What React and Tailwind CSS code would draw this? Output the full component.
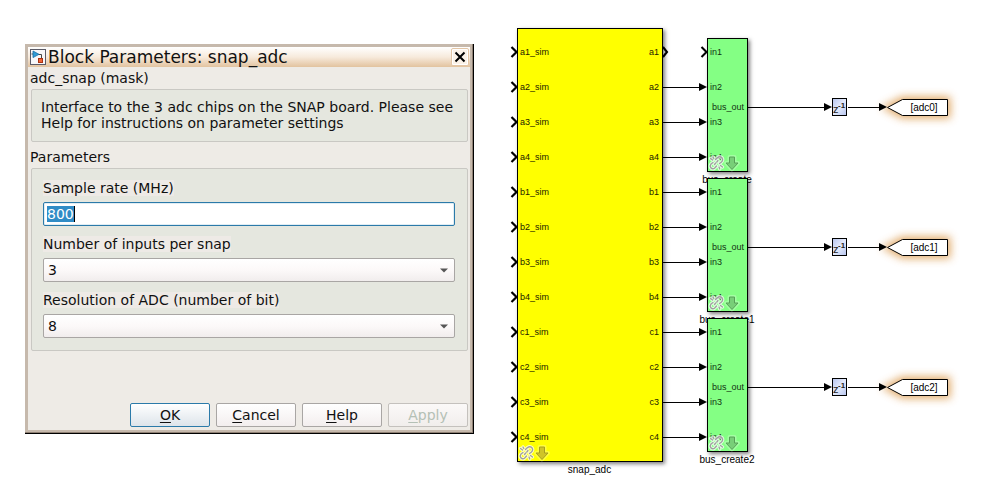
import React from "react";

const ROWS = ["a1", "a2", "a3", "a4", "b1", "b2", "b3", "b4", "c1", "c2", "c3", "c4"];
const GROUPS = [
  { name: "bus_create", tag: "[adc0]", z: "z-10" },
  { name: "bus_create1", tag: "[adc1]", z: "z-20" },
  { name: "bus_create2", tag: "[adc2]", z: "z-30" },
];

function BlockIcon() {
  return (
    <svg width="16" height="16" viewBox="0 0 16 16" className="shrink-0">
      <rect x="0.5" y="0.5" width="15" height="15" fill="#f6f6f8" stroke="#5a5a66" />
      <path d="M1.5 5H4M8 5.5H11.5V9" fill="none" stroke="#444" />
      <path d="M3 2L9 5.3L3 8.6Z" fill="#2e9bd6" stroke="#1c6ea4" strokeWidth="0.8" />
      <rect x="8.5" y="9.5" width="4" height="4" fill="#ef6537" stroke="#a93212" />
    </svg>
  );
}

function CloseButton() {
  return (
    <div className="flex h-[18px] w-[18px] items-center justify-center rounded-[2px] border border-[#e3c5a5] bg-[#fbf2e8] outline-1 -outline-offset-2 outline-white">
      <svg width="12" height="12" viewBox="0 0 12 12">
        <path d="M1.5 1.5L10.5 10.5M10.5 1.5L1.5 10.5" stroke="#000" strokeWidth="2" />
      </svg>
    </div>
  );
}

function Field({ label, children }) {
  return (
    <div className="h-14">
      <div className="h-4 w-fit bg-[#eeeae6] leading-4 whitespace-nowrap">{label}</div>
      <div className="mt-1.5">{children}</div>
    </div>
  );
}

function Select({ value }) {
  return (
    <div className="flex h-6 items-center justify-between rounded-[2px] border border-[#a9a6a4] bg-linear-to-b from-white via-[#fcf9f9] to-[#f1eded] pr-1.5 pl-1">
      <span className="leading-4">{value}</span>
      <svg width="8" height="5" viewBox="0 0 8 5">
        <path d="M0 0.5H8L4 4.5Z" fill="#555" />
      </svg>
    </div>
  );
}

function Button({ label, className }) {
  return (
    <div className={"flex h-6 w-20 items-center justify-center rounded-[2px] border leading-4 " + className}>
      <span className="underline decoration-1 underline-offset-2">{label[0]}</span>
      <span>{label.slice(1)}</span>
    </div>
  );
}

const NORMAL = "border-[#a9a6a4] bg-linear-to-b from-white to-[#f3eeee]";

function Dialog() {
  return (
    <div className="mt-[44px] ml-[25px] flex h-[390px] w-[449px] shrink-0 border-r border-b border-black font-['DejaVu_Sans',sans-serif] text-[14px] text-[#111]">
      <div className="flex grow border-r border-b border-[#8f8074]">
        <div className="flex grow flex-col border-t-[3px] border-r-2 border-b-2 border-l-[3px] border-[#c6b9ac] bg-[#eeebe6]">
          <div className="flex h-5 items-center justify-between bg-linear-to-b from-white via-[#f7eadc] to-[#e2c39f] pr-px pl-0.5">
            <div className="flex items-center gap-0.5">
              <BlockIcon />
              <span className="text-[17px] leading-5 whitespace-nowrap">Block Parameters: snap_adc</span>
            </div>
            <CloseButton />
          </div>
          <div className="mt-[3px] pl-0.5 leading-4">adc_snap (mask)</div>
          <div className="mt-[3px] mr-0.5 ml-[3px] h-[53px] rounded-[2px] border border-[#c9c8c3] bg-[#e5e7df] pt-[9px] pl-[9px] leading-4 whitespace-nowrap">
            Interface to the 3 adc chips on the SNAP board. Please see
            <br />
            Help for instructions on parameter settings
          </div>
          <div className="mt-[7px] pl-0.5 leading-4">Parameters</div>
          <div className="mt-[3px] mr-0.5 ml-[3px] h-[183px] rounded-[2px] border border-[#c9c8c3] bg-[#e5e7df] pt-[11px] pr-3 pl-[11px]">
            <Field label="Sample rate (MHz)">
              <div className="flex h-6 items-center rounded-[2px] border border-[#2b7aa9] bg-white pl-[3px] shadow-[inset_0_0_0_1px_#e0edf4]">
                <span className="h-4 border-r border-black bg-[#308cc6] leading-4 text-white">800</span>
              </div>
            </Field>
            <Field label="Number of inputs per snap">
              <Select value="3" />
            </Field>
            <Field label="Resolution of ADC (number of bit)">
              <Select value="8" />
            </Field>
          </div>
          <div className="mt-auto mr-0.5 mb-[3px] flex justify-end gap-1.5">
            <Button label="OK" className="border-[#2b7aa9] bg-linear-to-b from-white to-[#dde4ea]" />
            <Button label="Cancel" className={NORMAL} />
            <Button label="Help" className={NORMAL} />
            <Button label="Apply" className="border-[#c4c1bd] bg-linear-to-b from-[#fbf9f8] to-[#f1eeec] text-[#b4c0b5]" />
          </div>
        </div>
      </div>
    </div>
  );
}

function LinkBadges({ arrow, edge }) {
  const chain =
    "M6.5 4.5L8.5 2.6Q11 0.8 13 2.8Q14.5 5 12.5 7L10.5 8.5M7.5 11L5.5 13.2Q3.5 14.5 1.8 12.8Q0.5 11 2 9L4 7.5M9 5.5L7.8 7M6.8 8L5.5 9.5M1.5 3.5L3.5 5M4 2L4.8 3.5M11.5 10.5L13.5 12M10 12L10.8 14";
  return (
    <svg width="32" height="16" viewBox="0 0 32 16" className="overflow-visible">
      <g fill="none" strokeLinecap="round">
        <path d={chain} stroke="#fff" strokeOpacity="0.75" strokeWidth="3.4" />
        <path d={chain} stroke="#a0a0a0" strokeWidth="1.3" />
      </g>
      <path
        d="M20.5 2H25.5V8H29L23 14.5L17 8H20.5Z"
        fill="none"
        stroke="#fff"
        strokeOpacity="0.25"
        strokeWidth="4"
        strokeLinejoin="round"
      />
      <path d="M20.5 2H25.5V8H29L23 14.5L17 8H20.5Z" fill={arrow} stroke={edge} />
    </svg>
  );
}

const shadow = "shadow-[2px_2px_4px_rgba(0,0,0,0.5)]";
const blockText = "font-['Liberation_Sans',sans-serif] text-[9px] leading-[10px]";

function AdcBlock() {
  return (
    <div className="absolute top-[28px] left-[517px] w-[146px]">
      <div className={"relative h-[434px] border border-black bg-[#ffff00] pt-[5px] text-[#222200] " + shadow + " " + blockText}>
        {ROWS.map((r) => (
          <div key={r} className="flex h-[35px] items-center justify-between pr-[3px] pl-0.5">
            <span>{r}_sim</span>
            <span>{r}</span>
          </div>
        ))}
        <div className="absolute bottom-0 left-px h-4">
          <LinkBadges arrow="#cfc528" edge="#a79f20" />
        </div>
      </div>
      <div className="mt-0.5 pr-px text-center font-['Liberation_Sans',sans-serif] text-[10px] leading-3">snap_adc</div>
    </div>
  );
}

function BusBlock({ name, top, z }) {
  return (
    <div className={"absolute left-[697px] w-[60px] " + z} style={{ top }}>
      <div className={"relative ml-[10px] h-[134px] w-[41px] border border-black bg-[#84ff84] pt-[8px] text-[#123312] " + shadow + " " + blockText}>
        <div className="h-[35px] pl-0.5">in1</div>
        <div className="h-5 pl-0.5">in2</div>
        <div className="h-[15px] pr-[3px] text-right">bus_out</div>
        <div className="h-[35px] pl-0.5">in3</div>
        <div className="pl-0.5">in4</div>
        <div className="absolute bottom-0 left-px h-4">
          <LinkBadges arrow="#78cf78" edge="#58a058" />
        </div>
      </div>
      <div className="mt-0.5 text-center font-['Liberation_Sans',sans-serif] text-[10px] leading-3">{name}</div>
    </div>
  );
}

function Delay({ y }) {
  return (
    <div
      className="absolute left-[832px] h-[18px] w-[15px] border border-black bg-linear-to-br from-[#b9c6ee] via-[#e4ebfc] to-[#b9c6ee] font-['Liberation_Sans',sans-serif] text-[11px] text-[#222]"
      style={{ top: y - 9 }}
    >
      <span className="absolute top-1 left-0 leading-3">z</span>
      <span className="absolute top-0.5 left-[5px] text-[8px] leading-[10px] font-bold">-1</span>
    </div>
  );
}

function Wires() {
  return (
    <svg width="989" height="499" viewBox="0 0 989 499" className="absolute top-0 left-0 z-40">
      <defs>
        <filter id="glow" x="-40%" y="-100%" width="180%" height="300%">
          <feGaussianBlur stdDeviation="4" />
        </filter>
      </defs>
      {ROWS.map((r, i) => {
        const y = 52 + i * 35;
        return (
          <g key={r}>
            <path d={`M511.5 ${y - 5}L516.5 ${y}L511.5 ${y + 5}`} fill="none" stroke="#000" strokeWidth="2.2" />
            {i === 0 ? (
              <path d="M663 47L667 52L663 57M701.5 47L706.5 52L701.5 57" fill="none" stroke="#000" strokeWidth="2.1" />
            ) : (
              <>
                <path d={`M663 ${y + 0.5}H701`} stroke="#000" />
                <path d={`M699 ${y - 4}L707 ${y}L699 ${y + 4}Z`} />
              </>
            )}
          </g>
        );
      })}
      {GROUPS.map((g, i) => {
        const y = 107 + i * 140;
        const tag = `M887.5 ${y + 0.5}L902.5 ${y - 7.5}H947.5V${y + 8.5}H902.5Z`;
        return (
          <g key={g.name}>
            <path d={`M748 ${y + 0.5}H826M848 ${y + 0.5}H881`} stroke="#000" />
            <path d={tag} fill="#d99a4a" stroke="#e0a560" strokeWidth="6" opacity="0.9" filter="url(#glow)" />
            <path d={`M824 ${y - 4}L832 ${y}L824 ${y + 4}ZM879 ${y - 4}L887 ${y}L879 ${y + 4}Z`} />
            <path d={tag} fill="#fff" stroke="#000" />
            <text x="924" y={y + 3.5} textAnchor="middle" className="font-['Liberation_Sans',sans-serif] text-[10px]">
              {g.tag}
            </text>
          </g>
        );
      })}
    </svg>
  );
}

export default function App() {
  return (
    <div className="relative flex h-[499px] w-[989px] items-start overflow-hidden bg-white text-black">
      <Dialog />
      <AdcBlock />
      {GROUPS.map((g, i) => (
        <BusBlock key={g.name} name={g.name} z={g.z} top={38 + i * 140} />
      ))}
      {GROUPS.map((g, i) => (
        <Delay key={g.name} y={107 + i * 140} />
      ))}
      <Wires />
    </div>
  );
}
